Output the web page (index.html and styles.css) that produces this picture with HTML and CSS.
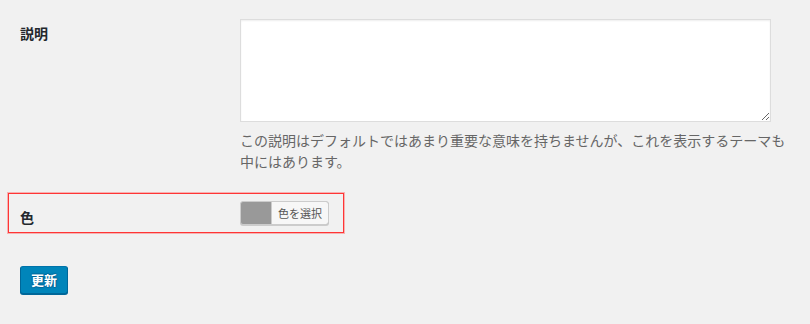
FILE: index.html
```html
<!DOCTYPE html>
<html lang="ja">

<head>
    <meta charset="UTF-8">
    <meta name="viewport" content="width=device-width, initial-scale=1.0">
    <title>タグの編集</title>
    <link rel="stylesheet" href="styles.css">
</head>

<body>
    <form class="edit-form">
        <div class="form-row">
            <label class="row-label" for="description">説明</label>
            <div class="row-field">
                <textarea id="description" class="desc-input"></textarea>
                <p class="description">この説明はデフォルトではあまり重要な意味を持ちませんが、これを表示するテーマも中にはあります。</p>
            </div>
        </div>
        <div class="form-row row-color">
            <label class="row-label label-color">色</label>
            <div class="row-field">
                <button type="button" class="color-result"><span class="color-result-text">色を選択</span></button>
            </div>
        </div>
        <button type="submit" class="button-primary">更新</button>
    </form>
</body>

</html>
```

FILE: styles.css
```css
body {
    margin: 0;
    padding: 19px 20px;
    background-color: #f1f1f1;
    font-family: "Noto Sans CJK JP", "Liberation Sans", sans-serif;
    font-size: 14px;
    color: #23282d;
}

.form-row {
    display: flex;
    align-items: flex-start;
}

.row-label {
    width: 220px;
    flex-shrink: 0;
    padding-top: 4px;
    font-weight: bold;
    line-height: 21px;
}

.row-field {
    width: 556px;
}

.desc-input {
    display: block;
    width: 531px;
    height: 103px;
    box-sizing: border-box;
    margin: 0;
    border: 1px solid #ddd;
    background: #fff;
    box-shadow: inset 0 1px 2px rgba(0, 0, 0, 0.07);
}

.description {
    margin: 8px 0 0;
    color: #666;
    line-height: 21px;
}

.row-color {
    width: 336px;
    box-sizing: border-box;
    margin: 21px 0 0 -12px;
    padding: 7px 0 7px 11px;
    border: 1px solid #ff3535;
    box-shadow: 0 0 0 1px rgba(255, 60, 60, 0.35);
}

.label-color {
    height: 24px;
    box-sizing: border-box;
    padding-top: 6px;
}

.row-color .row-field {
    width: auto;
}

.color-result {
    display: block;
    height: 24px;
    margin: 0;
    padding: 0 0 0 30px;
    border: 1px solid #ccc;
    border-radius: 3px;
    background-color: #999;
    box-shadow: 0 1px 0 #ccc;
    cursor: pointer;
}

.color-result-text {
    display: block;
    padding: 0 6px;
    border-left: 1px solid #ccc;
    border-radius: 0 2px 2px 0;
    background: #f7f7f7;
    color: #555;
    font-family: "Noto Sans CJK JP", sans-serif;
    font-size: 11px;
    line-height: 22px;
}

.button-primary {
    display: block;
    height: 28px;
    margin-top: 33px;
    padding: 0 10px;
    border: 1px solid #0073aa;
    border-color: #0073aa #006799 #006799;
    border-radius: 3px;
    background: #0085ba;
    box-shadow: 0 1px 0 #006799;
    color: #fff;
    font-family: "Noto Sans CJK JP", sans-serif;
    font-size: 13px;
    font-weight: bold;
    line-height: 26px;
    text-shadow: 0 -1px 1px #006799, 1px 0 1px #006799, 0 1px 1px #006799, -1px 0 1px #006799;
    cursor: pointer;
}
```
